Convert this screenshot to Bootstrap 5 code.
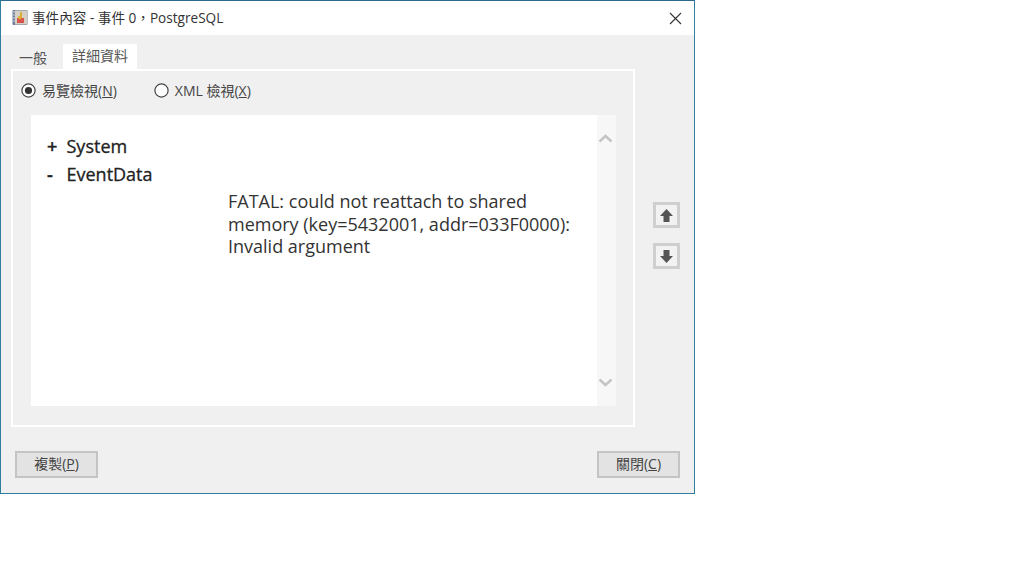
<!doctype html>
<html lang="zh-Hant">
<head>
<meta charset="utf-8">
<title>事件內容</title>
<link href="https://cdn.jsdelivr.net/npm/bootstrap@5.3.0/dist/css/bootstrap.min.css" rel="stylesheet">
<style>
html,body{background:#fff;}
body{font-family:"Open Sans","Noto Sans CJK TC",sans-serif;color:#222;}
.evt-win{width:695px;height:494px;border:1px solid #2f7f9f;border-top-color:#2d6a90;background:#f0f0f0;}
.evt-title{height:34px;background:#fff;padding:0 12px 0 11px;font-size:13.6px;color:#333;flex:none;}
.evt-close{width:13px;height:13px;display:block;}
.evt-body{padding:9px 0 0 10px;}
.evt-tabs{border:0;gap:0;height:25px;flex:none;}
.evt-tabs .nav-link{border:0;border-radius:0;padding:0;height:25px;font-size:14px;color:#555;background:#f0f0f0;display:flex;align-items:center;justify-content:center;}
.evt-tab1{width:52px;padding:1px 8px 0 0!important;}
.evt-tabs .nav-link.active{width:74px;background:#fff;color:#555;padding-bottom:2px!important;}
.evt-panel{width:624px;height:358px;border:2px solid #fff;background:#f0f0f0;flex:none;}
.evt-radios{height:44px;padding:0 0 6px 8px;gap:37px;font-size:14px;color:#444;flex:none;}
.evt-radio{gap:6px;}
.evt-radio svg{display:block;}
.evt-view{margin:0 0 0 18px;width:585px;height:291px;flex:none;}
.evt-content{width:566px;background:#fff;padding:17px 0 0 16px;font-size:18px;line-height:28px;color:#222;}
.evt-tree{font-size:18px;-webkit-text-stroke:.3px #222;}
.evt-sign{width:19.5px;display:inline-block;font-weight:600;}
.evt-msg{margin:2px 0 0 181px;width:350px;line-height:22.5px;font-size:18px;color:#333;}
.evt-scroll{width:19px;background:#f7f7f7;padding:19px 2px 19px 0;}
.evt-side{padding-left:18px;padding-top:133px;gap:15px;}
.evt-arrow{width:27px;height:26px;border:3px solid #cfcfcf;background:#f2f2f2;padding:0;border-radius:0;display:flex;align-items:center;justify-content:center;}
.evt-foot{padding:24px 0 0 4px;width:669px;}
.evt-btn{width:83px;height:27px;border:2px solid #c4c4c4;background:#e3e3e3;border-radius:0;padding:0 0 2px;font-size:14px;line-height:1;color:#444;}
.evt-btn:hover{background:#e3e3e3;border-color:#c4c4c4;color:#444;}
</style>
</head>
<body class="m-0">
<div class="evt-win d-flex flex-column">
  <div class="evt-title d-flex align-items-center justify-content-between">
    <div class="d-flex align-items-center gap-1">
      <svg width="16" height="17" viewBox="0 0 16 17"><rect x="0.5" y="1" width="15" height="15" rx="1" fill="#6f7f99"/><rect x="3" y="1.5" width="12" height="14" fill="#d6d0c4"/><path d="M1 3h2M1 6h2M1 9h2M1 12h2" stroke="#c9d2e0" stroke-width="1"/><rect x="5" y="9" width="7" height="5" fill="#d8544c"/><path d="M9 3v6" stroke="#d9a520" stroke-width="1.6"/><circle cx="7.8" cy="8.6" r="1.8" fill="#e0b030"/></svg>
      <span>事件內容 - 事件 0，PostgreSQL</span>
    </div>
    <svg class="evt-close" viewBox="0 0 13 13"><path d="M1 1l11 11M12 1L1 12" stroke="#333" stroke-width="1.1" fill="none"/></svg>
  </div>
  <div class="evt-body flex-grow-1 d-flex flex-column">
    <ul class="nav evt-tabs">
      <li class="nav-item"><a class="nav-link evt-tab1" href="#">一般</a></li>
      <li class="nav-item"><a class="nav-link active" href="#">詳細資料</a></li>
    </ul>
    <div class="d-flex">
      <div class="evt-panel d-flex flex-column">
        <div class="evt-radios d-flex align-items-center">
          <div class="evt-radio d-flex align-items-center">
            <svg width="15" height="15" viewBox="0 0 15 15"><circle cx="7.5" cy="7.5" r="6.6" fill="#fff" stroke="#444" stroke-width="1.2"/><circle cx="7.5" cy="7.5" r="3.6" fill="#333"/></svg>
            <span>易覽檢視(<u>N</u>)</span>
          </div>
          <div class="evt-radio d-flex align-items-center">
            <svg width="15" height="15" viewBox="0 0 15 15"><circle cx="7.5" cy="7.5" r="6.6" fill="#fff" stroke="#444" stroke-width="1.2"/></svg>
            <span>XML 檢視(<u>X</u>)</span>
          </div>
        </div>
        <div class="evt-view d-flex">
          <div class="evt-content">
            <div class="evt-tree"><span class="evt-sign">+</span>System</div>
            <div class="evt-tree"><span class="evt-sign">-</span>EventData</div>
            <div class="evt-msg">FATAL: could not reattach to shared memory (key=5432001, addr=033F0000): Invalid argument</div>
          </div>
          <div class="evt-scroll d-flex flex-column justify-content-between align-items-center">
            <svg width="15" height="9" viewBox="0 0 15 9"><path d="M1.5 7.5l6-5.5 6 5.5" stroke="#c4c4c4" stroke-width="2.4" fill="none"/></svg>
            <svg width="15" height="9" viewBox="0 0 15 9"><path d="M1.5 1.5l6 5.5 6-5.5" stroke="#c4c4c4" stroke-width="2.4" fill="none"/></svg>
          </div>
        </div>
      </div>
      <div class="evt-side d-flex flex-column">
        <button class="btn evt-arrow" type="button" aria-label="上一個"><svg width="15" height="15" viewBox="0 0 15 15"><path d="M7.5 1L14 8H10.5V14H4.5V8H1Z" fill="#555"/></svg></button>
        <button class="btn evt-arrow" type="button" aria-label="下一個"><svg width="15" height="15" viewBox="0 0 15 15"><path d="M4.5 1H10.5V7H14L7.5 14L1 7H4.5Z" fill="#555"/></svg></button>
      </div>
    </div>
    <div class="evt-foot d-flex justify-content-between">
      <button class="btn evt-btn" type="button">複製(<u>P</u>)</button>
      <button class="btn evt-btn" type="button">關閉(<u>C</u>)</button>
    </div>
  </div>
</div>
</body>
</html>
